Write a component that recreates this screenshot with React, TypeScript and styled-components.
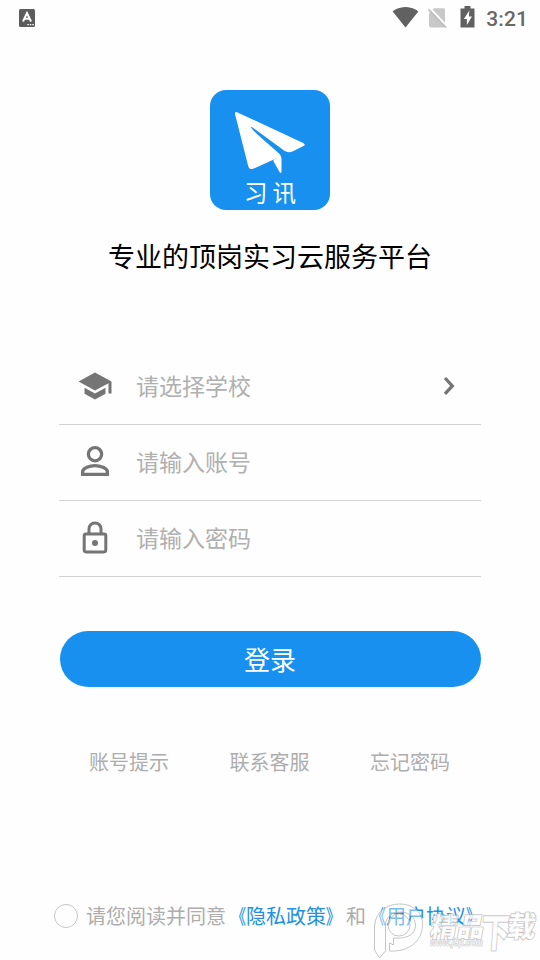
import React from "react";
import styled, { createGlobalStyle } from "styled-components";

const GlobalStyle = createGlobalStyle`
  * { box-sizing: border-box; }
  body {
    margin: 0;
    background: #fff;
    font-family: Roboto, "Noto Sans CJK SC", sans-serif;
  }
`;

const Screen = styled.main`
  position: relative;
  display: flex;
  flex-direction: column;
  align-items: center;
  width: 540px;
  height: 960px;
  overflow: hidden;
  background: #fefefe;
`;

const StatusBar = styled.header`
  display: flex;
  align-items: center;
  justify-content: space-between;
  width: 100%;
  height: 36px;
  padding: 0 12px 0 19px;
  color: #616161;
`;

const StatusIcons = styled.div`
  display: flex;
  align-items: center;
  height: 36px;
`;

const Clock = styled.span`
  margin-left: 9px;
  font: 500 21px/36px Roboto, sans-serif;
  letter-spacing: 0.1px;
  color: #686868;
  padding-top: 2px;
`;

const Logo = styled.div`
  display: flex;
  flex-direction: column;
  align-items: center;
  width: 120px;
  height: 120px;
  margin-top: 54px;
  border-radius: 16px;
  background: #1890ef;
`;

const LogoName = styled.span`
  margin-top: 1px;
  padding-left: 5px;
  color: #fff;
  font-size: 23.5px;
  line-height: 32px;
  letter-spacing: 5px;
`;

const Title = styled.h1`
  margin: 28px 0 0;
  color: #000;
  font-size: 27px;
  font-weight: 400;
  line-height: 40px;
`;

const Form = styled.section`
  width: 422px;
  margin-top: 71px;
`;

const Field = styled.div`
  display: flex;
  align-items: center;
  height: 76px;
  padding: 0 0 2px 18px;
  border-bottom: 1px solid #d2d2d2;
`;

const Placeholder = styled.span`
  flex: 1;
  margin-left: 23px;
  padding-top: 4px;
  color: #b0b0b0;
  font-size: 23px;
  line-height: 34px;
`;

const LoginButton = styled.button`
  width: 421px;
  height: 56px;
  margin: 54px 0 0;
  padding: 4px 0 0;
  border: 0;
  border-radius: 28px;
  background: #1890ef;
  color: #fff;
  font: 400 26px/52px Roboto, "Noto Sans CJK SC", sans-serif;
`;

const Links = styled.nav`
  display: flex;
  justify-content: space-between;
  width: 361px;
  margin: 61px 1px 0 0;
  color: #adadad;
  font-size: 20px;
  line-height: 30px;
`;

const Agreement = styled.div`
  display: flex;
  align-items: center;
  align-self: flex-start;
  margin: 122px 0 0 54px;
  color: #adadad;
  font-size: 20px;
  line-height: 30px;
  white-space: nowrap;
`;

const Radio = styled.span`
  width: 24px;
  height: 24px;
  margin-right: 8px;
  border: 1.5px solid #c6c6c6;
  border-radius: 50%;
`;

const AgreementText = styled.span`
  padding-top: 2px;
`;

const PolicyLink = styled.span`
  color: #2391e0;
`;

const Bracket = styled.span<{ $closing?: boolean }>`
  display: inline-block;
  transform: scaleX(0.72);
  transform-origin: ${(p) => (p.$closing ? "left" : "right")} center;
  -webkit-text-stroke: 0.2px #2391e0;
`;

const Watermark = styled.svg`
  position: absolute;
  left: 370px;
  top: 898px;
`;

function Policy({ name }: { name: string }) {
  return (
    <PolicyLink>
      <Bracket>《</Bracket>
      {name}
      <Bracket $closing>》</Bracket>
    </PolicyLink>
  );
}

const fields = [
  {
    label: "请选择学校",
    chevron: true,
    icon: (
      <path
        transform="scale(1.5)"
        fill="#757575"
        d="M5 13.18v4L12 21l7-3.82v-4L12 17l-7-3.82zM12 3L1 9l11 6 9-4.91V17h2V9L12 3z"
      />
    ),
  },
  {
    label: "请输入账号",
    icon: (
      <g fill="none" stroke="#757575" strokeWidth="3.3">
        <circle cx="18" cy="10.2" r="6.6" />
        <path d="M5.6 30.3v-2.6c0-3.7 7.4-6.1 12.4-6.1s12.4 2.4 12.4 6.1v2.6z" />
      </g>
    ),
  },
  {
    label: "请输入密码",
    icon: (
      <g fill="none" stroke="#757575" strokeWidth="3" transform="translate(0 .7)">
        <rect x="7.2" y="13.2" width="21.6" height="18" rx="1.8" />
        <path d="M12 13V8.2a6 6 0 0 1 12 0V13" />
        <circle cx="18" cy="22.3" r="3" fill="#757575" stroke="none" />
      </g>
    ),
  },
];

export default function App() {
  return (
    <>
      <GlobalStyle />
      <Screen>
        <StatusBar>
          <svg width="16" height="18" viewBox="0 0 16 18">
            <rect width="16" height="18" rx="1.5" fill="#5c5c5c" />
            <path d="M4 12.5L8 4l4 8.5M5.5 9.7h5" fill="none" stroke="#fff" strokeWidth="2" />
            <path d="M8.3 15.6h1.5m1 0h1.5m1 0h1.5" stroke="#fff" strokeWidth="1.3" />
          </svg>
          <StatusIcons>
            <svg width="85" height="36" viewBox="392 0 85 36">
              <path
                transform="translate(392.3 3.8) scale(1.1)"
                fill="#616161"
                d="M12.01 21.49L23.64 7c-.45-.34-4.93-4-11.64-4C5.28 3 .81 6.66.36 7l11.63 14.49.01.01.01-.01z"
              />
              <path d="M434 8.3h9.5q1.5 0 1.5 1.5v15.8q0 1.8-1.5 1.8h-13q-1.5 0-1.5-1.8V13.5z" fill="#c8c8c8" />
              <path d="M429.7 8L447 26.5" stroke="#fefefe" strokeWidth="2.2" />
              <path d="M428.4 9.4L446 27.7" stroke="#bebebe" strokeWidth="1.9" />
              <path d="M464.5 6h6v2.4h4v19.2h-14V8.4h4z" fill="#616161" />
              <path d="M469.3 10.5l-5.4 8.5h3v6l5-8.5h-3z" fill="#fff" />
            </svg>
            <Clock>3:21</Clock>
          </StatusIcons>
        </StatusBar>
        <Logo>
          <svg width="120" height="87" viewBox="0 0 120 87">
            <path
              d="M27 22.2L93.2 53q3 1.8.3 3.1L83 61.2q-4.2 2-8.3-.2L42.5 37.4q-2.5-1.6-1.5.2 3 4 9 9.2L68.5 63q3 2.5 3 6.5v12.3q-.3 2.3-1.8.5L63.6 71.6q-.6-1.4.8-2.4L44.5 78.3q-5 2.4-6.4-2.6L25 24q-.2-2.7 2-1.8z"
              fill="#fff"
            />
            <path d="M63.8 71.2q-.5-1 .6-2l2.6-1.3" fill="none" stroke="#8fc7f7" strokeWidth=".5" />
          </svg>
          <LogoName>习讯</LogoName>
        </Logo>
        <Title>专业的顶岗实习云服务平台</Title>
        <Form>
          {fields.map((field) => (
            <Field key={field.label}>
              <svg width="36" height="36" viewBox="0 0 36 36">
                {field.icon}
              </svg>
              <Placeholder>{field.label}</Placeholder>
              {field.chevron && (
                <svg width="41" height="36" viewBox="0 0 41 36">
                  <path d="M5 10l7.3 7.9-7.3 7.9" fill="none" stroke="#757575" strokeWidth="3.3" />
                </svg>
              )}
            </Field>
          ))}
        </Form>
        <LoginButton>登录</LoginButton>
        <Links>
          <span>账号提示</span>
          <span>联系客服</span>
          <span>忘记密码</span>
        </Links>
        <Agreement>
          <Radio />
          <AgreementText>
            请您阅读并同意
            <Policy name="隐私政策" />
            和
            <Policy name="用户协议" />
          </AgreementText>
        </Agreement>
        <Watermark width="170" height="62" viewBox="370 898 170 62" aria-hidden="true">
          <g fill="#fff" fillOpacity=".4" stroke="#b8b8b8" strokeWidth=".8">
            <path d="M374.5 950v-24c1-14 12-22 25-22 14 0 24 9 23 22-1 15-13 26-33 25v-8l4 2v-7c15 1 22-4 22-13 0-8-7-13-15-13s-15 5-15 13v26l-6 7z" />
            <circle cx="399" cy="925" r="11" />
          </g>
          <g
            fill="#fff"
            fillOpacity=".75"
            stroke="#b5b5b5"
            strokeWidth="1"
            paintOrder="stroke"
            fontFamily="'Noto Sans CJK SC', sans-serif"
            fontWeight="900"
          >
            <text transform="translate(429 937) skewX(-10)" fontSize="27">精品</text>
            <text transform="translate(480 947) skewX(-4) scale(.88 1.2)" fontSize="33">下</text>
            <text transform="translate(506 937) skewX(-6)" fontSize="29">载</text>
            <text
              x="430"
              y="946"
              fontSize="10"
              fontFamily="'Liberation Sans', sans-serif"
              fontStyle="italic"
              fontWeight="700"
              strokeWidth=".7"
              textLength="53"
              lengthAdjust="spacingAndGlyphs"
            >
              www.j9p.com
            </text>
          </g>
        </Watermark>
      </Screen>
    </>
  );
}
